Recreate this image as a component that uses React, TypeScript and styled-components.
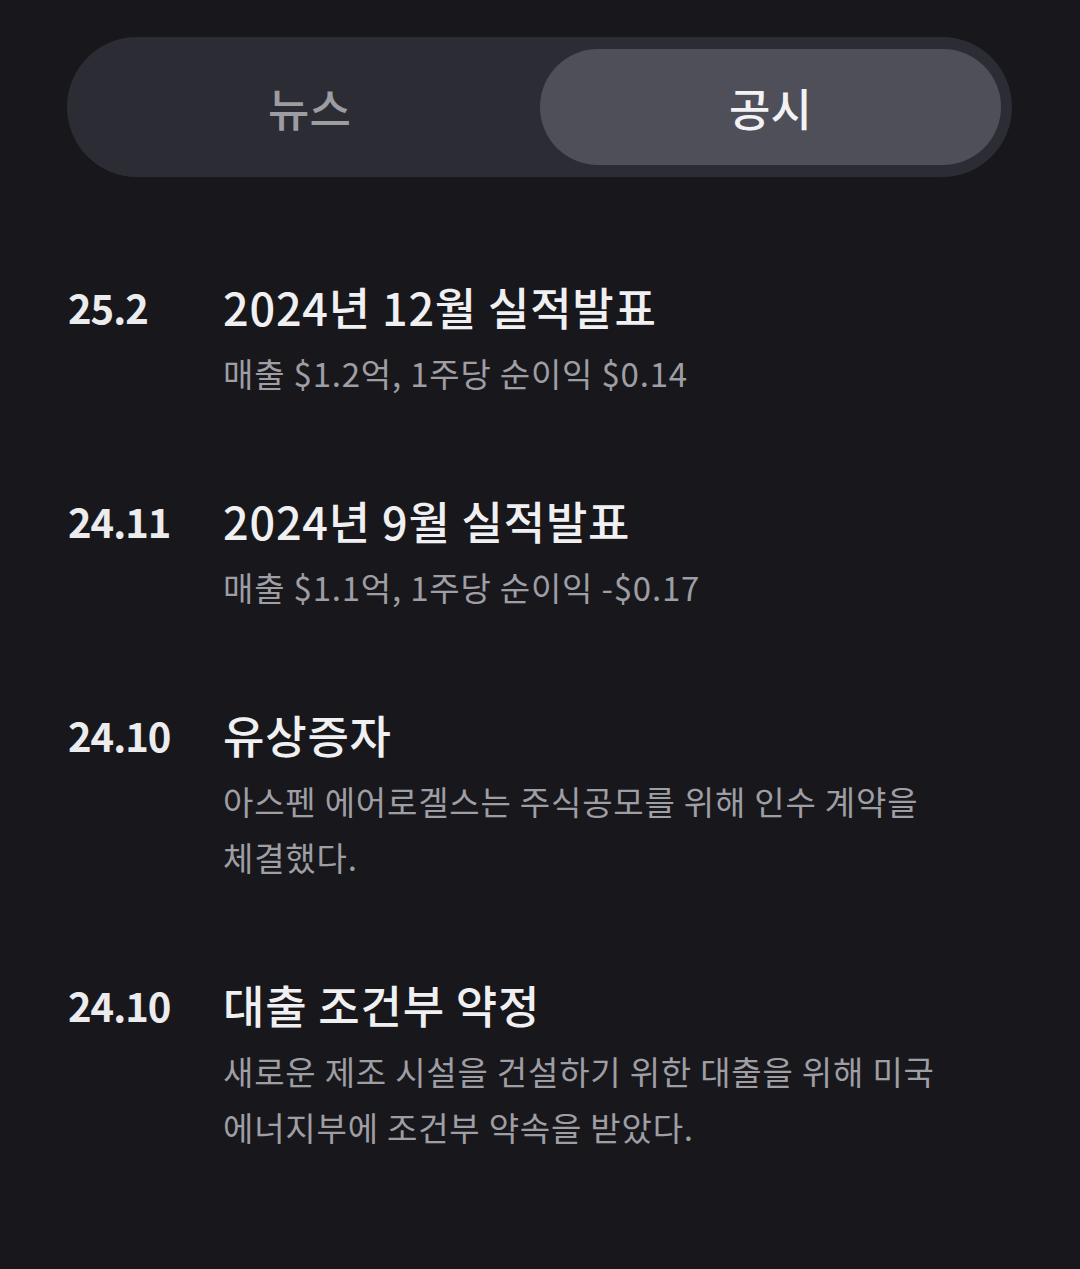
import React, { useState } from "react";
import styled, { createGlobalStyle } from "styled-components";

const GlobalStyle = createGlobalStyle`
  html, body {
    margin: 0;
    padding: 0;
    background: #18181c;
  }
  body {
    font-family: "Noto Sans CJK KR", "Noto Sans", sans-serif;
    color: #ececef;
  }
`;

const Page = styled.div`
  min-height: 1269px;
  padding: 37px 68px 0 67px;
  box-sizing: border-box;
  background: #18181c;
`;

const Segmented = styled.div`
  display: grid;
  grid-template-columns: 1fr 1fr;
  width: 945px;
  height: 140px;
  padding: 12px 11px 12px 12px;
  box-sizing: border-box;
  border-radius: 70px;
  background: #2c2d34;
`;

const SegmentButton = styled.button<{ $active: boolean }>`
  border: none;
  border-radius: 58px;
  background: ${(p) => (p.$active ? "#4f4f5a" : "transparent")};
  color: ${(p) => (p.$active ? "#f2f2f4" : "#9c9ca2")};
  font-family: inherit;
  font-size: 45px;
  font-weight: 500;
  letter-spacing: 0;
  cursor: pointer;
  padding: 0;
`;

const List = styled.ul`
  list-style: none;
  margin: 100px 0 0;
  padding: 0 0 0 1px;
  display: flex;
  flex-direction: column;
  gap: 90px;
`;

const Row = styled.li`
  display: grid;
  grid-template-columns: 155px 1fr;
  align-items: start;
`;

const DateLabel = styled.div`
  font-size: 40px;
  line-height: 60px;
  font-weight: 600;
  letter-spacing: -1px;
  color: #ececef;
`;

const Body = styled.div`
  display: flex;
  flex-direction: column;
  gap: 8px;
`;

const Title = styled.div`
  font-size: 45px;
  line-height: 60px;
  font-weight: 500;
  letter-spacing: 0.8px;
  color: #f0f0f2;
`;

const Summary = styled.div`
  font-size: 33px;
  line-height: 56px;
  font-weight: 400;
  letter-spacing: 0.8px;
  color: #9e9ea4;
  max-width: 730px;
  word-break: keep-all;
`;

const filings = [
  { date: "25.2", title: "2024년 12월 실적발표", summary: "매출 $1.2억, 1주당 순이익 $0.14" },
  { date: "24.11", title: "2024년 9월 실적발표", summary: "매출 $1.1억, 1주당 순이익 -$0.17" },
  {
    date: "24.10",
    title: "유상증자",
    summary: "아스펜 에어로겔스는 주식공모를 위해 인수 계약을 체결했다.",
  },
  {
    date: "24.10",
    title: "대출 조건부 약정",
    summary: "새로운 제조 시설을 건설하기 위한 대출을 위해 미국 에너지부에 조건부 약속을 받았다.",
  },
];

export default function App() {
  const [tab, setTab] = useState<"news" | "filings">("filings");

  return (
    <>
      <GlobalStyle />
      <Page>
        <Segmented>
          <SegmentButton $active={tab === "news"} onClick={() => setTab("news")}>
            뉴스
          </SegmentButton>
          <SegmentButton $active={tab === "filings"} onClick={() => setTab("filings")}>
            공시
          </SegmentButton>
        </Segmented>
        <List>
          {filings.map((f, i) => (
            <Row key={i}>
              <DateLabel>{f.date}</DateLabel>
              <Body>
                <Title>{f.title}</Title>
                <Summary>{f.summary}</Summary>
              </Body>
            </Row>
          ))}
        </List>
      </Page>
    </>
  );
}
